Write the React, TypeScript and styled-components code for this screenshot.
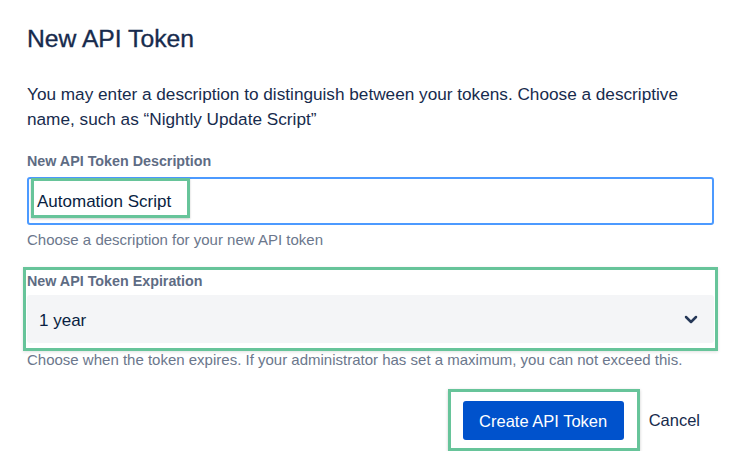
import styled, { createGlobalStyle } from "styled-components";

const GlobalStyle = createGlobalStyle`
  body {
    margin: 0;
    background: #ffffff;
    font-family: "Liberation Sans", Arial, sans-serif;
  }
`;

const green = "#67c49a";

const Page = styled.div`
  padding: 25px 26px 0 27px;
  color: #172b4d;
`;

const Title = styled.h1`
  margin: 0;
  font-size: 24.7px;
  line-height: 28px;
  font-weight: 500;
  -webkit-text-stroke: 0.35px #172b4d;
  color: #172b4d;
`;

const Intro = styled.p`
  margin: 29px 0 0;
  font-size: 17.2px;
  line-height: 25px;
  color: #172b4d;
`;

const Label = styled.label<{ $gap?: number }>`
  display: block;
  margin-top: ${(p) => p.$gap ?? 0}px;
  font-size: 14.3px;
  line-height: 20px;
  font-weight: 700;
  color: #5e6c84;
`;

const TextField = styled.div`
  display: flex;
  align-items: flex-start;
  box-sizing: border-box;
  height: 48px;
  margin-top: 6px;
  padding-left: 2px;
  border: 2px solid #4c9aff;
  border-radius: 3px;
  background: #ffffff;
`;

const MarkedValue = styled.span`
  display: inline-block;
  box-sizing: border-box;
  height: 40px;
  margin-top: -1px;
  padding: 11px 16px 0 3px;
  border: 3px solid ${green};
  box-shadow: 0 1px 2px rgba(0, 0, 0, 0.2);
  font-size: 17px;
  line-height: 20px;
  color: #091e42;
`;

const Helper = styled.div<{ $gap: number }>`
  margin-top: ${(p) => p.$gap}px;
  font-size: 15px;
  line-height: 20px;
  color: #6b778c;
`;

const MarkedGroup = styled.div`
  margin-top: 21px;
  padding-bottom: 4px;
  outline: 3px solid ${green};
  outline-offset: 1px;
  box-shadow: 0 0 0 4px #fff, 0 1px 3px 4px rgba(0, 0, 0, 0.12);
`;

const Select = styled.div`
  display: flex;
  align-items: center;
  justify-content: space-between;
  box-sizing: border-box;
  height: 48px;
  margin-top: 4px;
  padding: 0 16px 0 12px;
  background: #f4f5f7;
  border-radius: 3px;
`;

const SelectValue = styled.span`
  padding-top: 4px;
  font-size: 17px;
  line-height: 20px;
  color: #091e42;
`;

const Actions = styled.div`
  display: flex;
  justify-content: flex-end;
  align-items: center;
  gap: 9px;
  margin-top: 19px;
  padding-right: 14px;
`;

const MarkedAction = styled.div`
  padding: 9px 13px 8px 12px;
  border: 3px solid ${green};
  box-shadow: 0 1px 3px rgba(0, 0, 0, 0.2);
`;

const PrimaryButton = styled.button`
  display: block;
  height: 39px;
  width: 161px;
  padding: 0;
  border: none;
  border-radius: 3px;
  background: #0052cc;
  color: #ffffff;
  font-family: "Liberation Sans", Arial, sans-serif;
  font-size: 16.5px;
  line-height: 20px;
  cursor: pointer;
`;

const LinkButton = styled.button`
  padding: 0;
  border: none;
  background: none;
  color: #172b4d;
  font-family: "Liberation Sans", Arial, sans-serif;
  font-size: 16.5px;
  line-height: 20px;
  cursor: pointer;
`;

const Chevron = () => (
  <svg width="14" height="9" viewBox="0 0 14 9" aria-hidden="true">
    <polyline
      points="2,2 7,7 12,2"
      fill="none"
      stroke="#253858"
      strokeWidth="2.5"
      strokeLinecap="round"
      strokeLinejoin="round"
    />
  </svg>
);

const App = () => {
  return (
    <>
      <GlobalStyle />
      <Page>
        <Title>New API Token</Title>
        <Intro>
          You may enter a description to distinguish between your tokens.
          Choose a descriptive name, such as “Nightly Update Script”
        </Intro>

        <Label $gap={19}>New API Token Description</Label>
        <TextField>
          <MarkedValue>Automation Script</MarkedValue>
        </TextField>
        <Helper $gap={5}>Choose a description for your new API token</Helper>

        <MarkedGroup>
          <Label>New API Token Expiration</Label>
          <Select>
            <SelectValue>1 year</SelectValue>
            <Chevron />
          </Select>
        </MarkedGroup>
        <Helper $gap={3}>
          Choose when the token expires. If your administrator has set a
          maximum, you can not exceed this.
        </Helper>

        <Actions>
          <MarkedAction>
            <PrimaryButton type="button">Create API Token</PrimaryButton>
          </MarkedAction>
          <LinkButton type="button">Cancel</LinkButton>
        </Actions>
      </Page>
    </>
  );
};

export default App;
